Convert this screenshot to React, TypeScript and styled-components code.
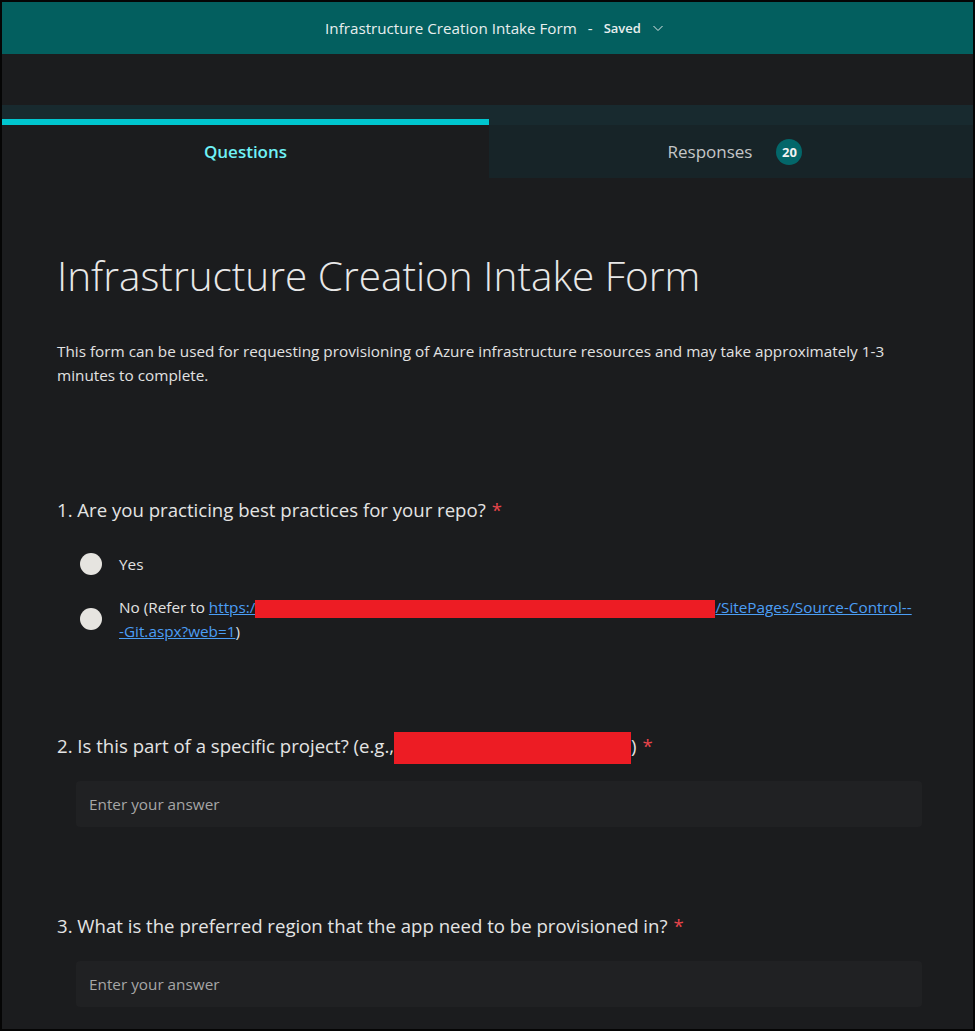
import React from 'react';
import styled, { createGlobalStyle } from 'styled-components';

const GlobalStyle = createGlobalStyle`
  html, body {
    margin: 0;
    padding: 0;
    background: #000;
  }
  body {
    font-family: 'Open Sans', 'Noto Sans', sans-serif;
  }
`;

const Frame = styled.div`
  width: 975px;
  height: 1031px;
  box-sizing: border-box;
  border: 2px solid #050505;
  background: #1b1c1e;
  overflow: hidden;
  display: flex;
  flex-direction: column;
`;

const TopBar = styled.header`
  height: 52px;
  padding-left: 14px;
  background: #035f5f;
  display: flex;
  align-items: center;
  justify-content: center;
  gap: 11px;
  color: #e8eeee;
  font-size: 15.2px;
`;

const Saved = styled.span`
  font-size: 13px;
  font-weight: 600;
`;

const Gap = styled.div`
  height: 51px;
`;

const Tabs = styled.div`
  display: flex;
  background: #182a2f;
  padding-top: 14px;
`;

const Tab = styled.div<{ active?: boolean }>`
  flex: ${(p) => (p.active ? '0 0 487px' : '1')};
  display: flex;
  flex-direction: column;
`;

const Indicator = styled.div<{ active?: boolean }>`
  height: 6px;
  background: ${(p) => (p.active ? '#00c6cf' : 'transparent')};
`;

const TabBody = styled.div<{ active?: boolean }>`
  height: 53px;
  display: flex;
  align-items: center;
  justify-content: center;
  gap: 24px;
  padding-left: ${(p) => (p.active ? 0 : 8)}px;
  background: ${(p) => (p.active ? '#1b1c1e' : '#172428')};
  color: ${(p) => (p.active ? '#6ff1f6' : '#c4c6c7')};
  font-size: 17px;
  font-weight: ${(p) => (p.active ? 600 : 400)};
`;

const Badge = styled.span`
  width: 26px;
  height: 26px;
  border-radius: 50%;
  background: #03676a;
  color: #f2f2f2;
  font-size: 13px;
  font-weight: 700;
  display: flex;
  align-items: center;
  justify-content: center;
`;

const Content = styled.main`
  padding: 74px 51px 0 55px;
  color: #e6e6e6;
`;

const Title = styled.h1`
  margin: 0;
  font-size: 40.5px;
  font-weight: 300;
  line-height: 48px;
  color: #e8e8e8;
`;

const Description = styled.p`
  margin: 39px 0 0;
  font-size: 15.3px;
  line-height: 24px;
  color: #e2e2e2;
`;

const Question = styled.section<{ space: number }>`
  margin-top: ${(p) => p.space}px;
`;

const QuestionTitle = styled.div`
  font-size: 18.6px;
  line-height: 28px;
  color: #e4e4e4;
`;

const Required = styled.span`
  color: #e8454b;
  margin-left: 6px;
`;

const Options = styled.div`
  display: flex;
  flex-direction: column;
  gap: 19px;
  margin: 28px 0 0 23px;
`;

const Option = styled.label`
  display: flex;
  align-items: center;
  gap: 17px;
  font-size: 15.3px;
  line-height: 24px;
  color: #e2e2e2;
`;

const Radio = styled.span`
  flex: 0 0 22px;
  height: 22px;
  border-radius: 50%;
  background: #e6e4e0;
`;

const OptionText = styled.span`
  max-width: 810px;
`;

const Link = styled.a`
  color: #4b9ef5;
  text-decoration: underline;
`;

const Redact = styled.span<{ w: number; h: number }>`
  display: inline-block;
  width: ${(p) => p.w}px;
  height: ${(p) => p.h}px;
  margin: -6px 0;
  background: #ed1c24;
  vertical-align: middle;
`;

const Answer = styled.div`
  margin: 21px 0 0 19px;
  height: 46px;
  background: #202123;
  border-radius: 4px;
  display: flex;
  align-items: center;
  padding-left: 13px;
  font-size: 15.3px;
  color: #a6a6a6;
`;

const App = () => {
  return (
    <>
      <GlobalStyle />
      <Frame>
        <TopBar>
          <span>Infrastructure Creation Intake Form</span>
          <span>-</span>
          <Saved>Saved</Saved>
          <svg width="12" height="12" viewBox="0 0 12 12" fill="none">
            <path d="M1.5 4l4.5 4.5L10.5 4" stroke="#dfe8e8" strokeWidth="1" />
          </svg>
        </TopBar>
        <Gap />
        <Tabs>
          <Tab active>
            <Indicator active />
            <TabBody active>Questions</TabBody>
          </Tab>
          <Tab>
            <Indicator />
            <TabBody>
              <span>Responses</span>
              <Badge>20</Badge>
            </TabBody>
          </Tab>
        </Tabs>
        <Content>
          <Title>Infrastructure Creation Intake Form</Title>
          <Description>
            This form can be used for requesting provisioning of Azure infrastructure resources and may take approximately 1-3 minutes to complete.
          </Description>
          <Question space={109}>
            <QuestionTitle>
              1. Are you practicing best practices for your repo?<Required>*</Required>
            </QuestionTitle>
            <Options>
              <Option>
                <Radio />
                <OptionText>Yes</OptionText>
              </Option>
              <Option>
                <Radio />
                <OptionText>
                  No (Refer to <Link>https:/</Link>
                  <Redact w={460} h={18} />
                  <Link>
                    /SitePages/Source-Control--
                    <br />
                    -Git.aspx?web=1
                  </Link>
                  )
                </OptionText>
              </Option>
            </Options>
          </Question>
          <Question space={89}>
            <QuestionTitle>
              2. Is this part of a specific project? (e.g.,<Redact w={237} h={32} />)<Required>*</Required>
            </QuestionTitle>
            <Answer>Enter your answer</Answer>
          </Question>
          <Question space={85}>
            <QuestionTitle>
              3. What is the preferred region that the app need to be provisioned in?<Required>*</Required>
            </QuestionTitle>
            <Answer>Enter your answer</Answer>
          </Question>
        </Content>
      </Frame>
    </>
  );
};

export default App;
